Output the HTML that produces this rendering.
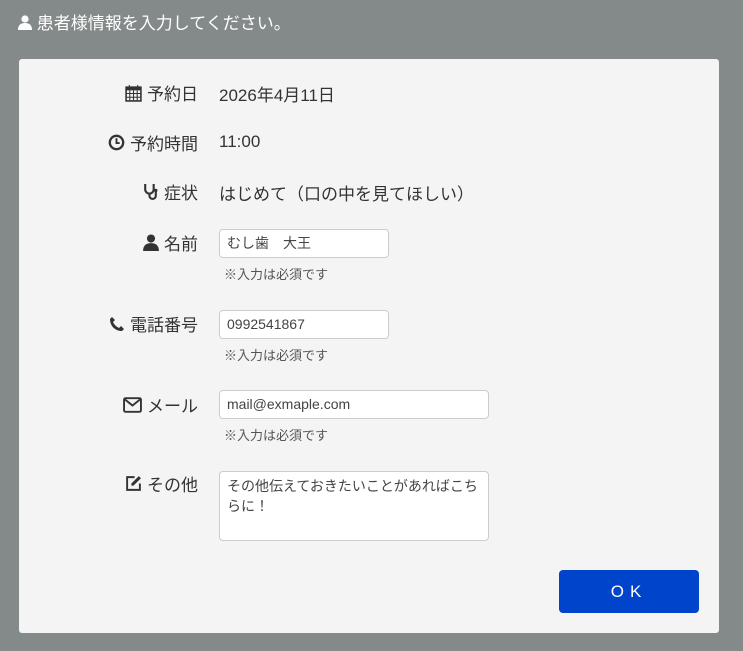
<!DOCTYPE html>
<html><head><meta charset="utf-8"><style>
body{margin:0;width:743px;height:651px;background:#848a89;font-family:"Liberation Sans","Noto Sans CJK JP",sans-serif;position:relative;overflow:hidden;color:#333}
.title{position:absolute;left:18px;top:9px;color:#fff;font-size:17px}
.panel{position:absolute;left:19px;top:59px;width:700px;height:574px;background:#f4f4f4;border-radius:3px}
.lab{position:absolute;right:521px;font-size:17px;color:#333;white-space:nowrap;display:flex;align-items:center;gap:5px}
.val{position:absolute;left:200px;font-size:17px;color:#333}
.inp{position:absolute;left:200px;height:29px;border:1px solid #ccc;border-radius:4px;background:#fff;box-sizing:border-box;font-size:14px;padding:0 7px;line-height:27px;color:#444}
.help{position:absolute;left:205px;font-size:13px;color:#555}
.btn{position:absolute;left:540px;top:511px;width:140px;height:43px;background:#0044cc;border-radius:4px;color:#fff;font-size:17px;letter-spacing:6px;text-align:center;line-height:43px}
svg{display:block}
</style></head><body>
<div class="title"><span style="display:inline-block;vertical-align:-1px"><svg width="14" height="15" viewBox="0 0 14 15"><circle cx="7" cy="4" r="3.6" fill="#fff"/><path d="M0 15 Q0 8 7 8 Q14 8 14 15Z" fill="#fff"/></svg></span> 患者様情報を入力してください。</div>
<div class="panel">
<div class="lab" style="top:21px"><svg width="17" height="18" viewBox="0 0 16 17"><rect x="1" y="3" width="14" height="13" fill="none" stroke="#333" stroke-width="1.5"/><rect x="1" y="3" width="14" height="3" fill="#333"/><path d="M4 1v4M12 1v4M1 9h14M1 12.5h14M4.5 6v10M8 6v10M11.5 6v10" stroke="#333" stroke-width="1"/></svg>予約日</div>
<div class="val" style="top:22px">2026年4月11日</div>
<div class="lab" style="top:71px"><svg width="17" height="17" viewBox="0 0 16 16"><circle cx="8" cy="8" r="6.3" fill="none" stroke="#333" stroke-width="2.2"/><path d="M8 4v4.5h3" stroke="#333" stroke-width="1.8" fill="none"/></svg>予約時間</div>
<div class="val" style="top:73px">11:00</div>
<div class="lab" style="top:120px"><svg width="17" height="18" viewBox="0 0 16 17"><path d="M3 1v5a4 4 0 0 0 8 0V1M7 10v2a3 3 0 0 0 6 0V8" stroke="#333" stroke-width="2" fill="none"/><circle cx="13" cy="7" r="1.6" fill="#333"/></svg>症状</div>
<div class="val" style="top:121px">はじめて（口の中を見てほしい）</div>
<div class="lab" style="top:171px"><svg width="16" height="17" viewBox="0 0 14 15"><circle cx="7" cy="4" r="3.6" fill="#333"/><path d="M0 15 Q0 8 7 8 Q14 8 14 15Z" fill="#333"/></svg>名前</div>
<div class="inp" style="top:170px;width:170px">むし歯　大王</div>
<div class="help" style="top:205px">※入力は必須です</div>
<div class="lab" style="top:252px"><svg width="16" height="16" viewBox="0 0 16 16"><path d="M3 1l3 3-2 2c1 2.5 3 4.5 6 6l2-2 3 3-2 2C6 15 1 10 1 3z" fill="#333"/></svg>電話番号</div>
<div class="inp" style="top:251px;width:170px">0992541867</div>
<div class="help" style="top:286px">※入力は必須です</div>
<div class="lab" style="top:333px"><svg width="19" height="16" viewBox="0 0 18 15"><rect x="1" y="1" width="16" height="13" rx="1.5" fill="none" stroke="#333" stroke-width="1.8"/><path d="M1.5 2l7.5 6 7.5-6" fill="none" stroke="#333" stroke-width="1.8"/></svg> メール</div>
<div class="inp" style="top:331px;width:270px">mail@exmaple.com</div>
<div class="help" style="top:366px">※入力は必須です</div>
<div class="lab" style="top:412px"><svg width="17" height="17" viewBox="0 0 16 16"><path d="M9 2H2v12h12V8" fill="none" stroke="#333" stroke-width="1.8"/><path d="M13 1l2 2-7 7H6V8z" fill="#333"/></svg> その他</div>
<div class="inp" style="top:412px;width:270px;height:70px;line-height:20px;padding-top:4px;white-space:normal">その他伝えておきたいことがあればこちらに！</div>
<div class="btn">OK</div>
</div>
</body></html>
